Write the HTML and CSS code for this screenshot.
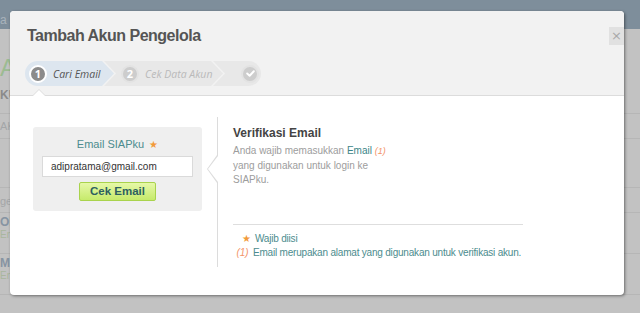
FILE: index.html
```html
<!DOCTYPE html>
<html>
<head>
<meta charset="utf-8">
<link rel="stylesheet" href="styles.css">
</head>
<body>
<div class="page">
  <div class="topbar"><span class="topbar-text">a H</span></div>
  <div class="page-content">
    <div class="pc-title">A</div>
    <div class="pc-sub">KU</div>
    <div class="pc-row pc-ak">AK</div>
    <div class="pc-row pc-empty"></div>
    <div class="pc-row pc-gel">gel</div>
    <div class="pc-row pc-item"><b>OM</b><small>Em</small></div>
    <div class="pc-row pc-item"><b>MO</b><small>Em</small></div>
    <div class="pc-row"></div>
  </div>
</div>

<div class="modal">
  <div class="modal-header">
    <h1 class="modal-title">Tambah Akun Pengelola</h1>
    <button class="close">&times;</button>
    <div class="steps">
      <div class="step step-active">
        <span class="num">1</span><span class="label">Cari Email</span>
      </div>
      <div class="step step-2">
        <span class="num num-off">2</span><span class="label">Cek Data Akun</span>
      </div>
      <div class="step step-3">
        <span class="num num-off">
          <svg width="9" height="7" viewBox="0 0 10 8"><path d="M1.2 4 L4 6.6 L8.8 1.4" fill="none" stroke="#fff" stroke-width="2.2" stroke-linecap="round" stroke-linejoin="round"/></svg>
        </span>
      </div>
    </div>
    <span class="caret"></span>
  </div>
  <div class="modal-body">
    <div class="form-box">
      <div class="form-label">Email SIAPku <span class="star">&#9733;</span></div>
      <input class="form-input" type="text" value="adipratama@gmail.com">
      <button class="btn-cek">Cek Email</button>
    </div>
    <div class="info">
      <span class="notch"></span>
      <h2 class="info-title">Verifikasi Email</h2>
      <p class="info-text">Anda wajib memasukkan <span class="teal">Email</span> <i class="ref">(1)</i><br>yang digunakan untuk login ke<br>SIAPku.</p>
      <div class="notes">
        <div class="note"><span class="note-mark star">&#9733;</span>Wajib diisi</div>
        <div class="note"><i class="note-mark ref">(1)</i>Email merupakan alamat yang digunakan untuk verifikasi akun.</div>
      </div>
    </div>
  </div>
</div>
</body>
</html>
```

FILE: styles.css
```css
* { box-sizing: border-box; }
html, body { margin: 0; padding: 0; }
body {
  width: 640px;
  height: 313px;
  overflow: hidden;
  background: #c0c0c0;
  font-family: "Liberation Sans", Arial, sans-serif;
  position: relative;
}
.page { height: 313px; overflow: hidden; }
.topbar {
  height: 29px;
  background: #7e8e9b;
  padding: 10px 0 0 0;
}
.topbar-text { color: #a9b3bb; font-size: 12px; }
.page-content { background: #c2c2c2; color: #9a9a9a; }
.pc-title { color: #9cbb92; font-size: 24px; line-height: 24px; padding-top: 27px; height: 56px; }
.pc-sub { font-weight: bold; font-size: 12px; color: #8a8a8a; height: 28px; padding-top: 3px; }
.pc-row { border-top: 1px solid #b6b6b6; font-size: 11px; color: #a4a6a8; }
.pc-ak { height: 25px; padding-top: 6px; }
.pc-empty { height: 49px; }
.pc-gel { height: 25px; padding-top: 7px; }
.pc-item { height: 41px; padding-top: 3px; line-height: 11px; }
.pc-item b { display: block; color: #8794a2; font-size: 12px; line-height: 13px; }
.pc-item small { color: #a9b69e; font-size: 10px; }
.pc-row:last-child { height: 20px; }

.modal {
  position: absolute;
  left: 10px;
  top: 11px;
  width: 614px;
  height: 284px;
  background: #fff;
  border-radius: 4px;
  box-shadow: 1px 1px 3px rgba(0,0,0,0.45);
  overflow: hidden;
  display: flex;
  flex-direction: column;
}
.modal-header {
  height: 85px;
  flex-shrink: 0;
  background: #f2f2f2;
  border-bottom: 1px solid #dcdcdc;
  padding: 15px 0 0 15px;
  position: relative;
}
.modal-title {
  margin: 0 0 0 2px;
  font-size: 16px;
  letter-spacing: -0.5px;
  font-weight: bold;
  color: #555;
  line-height: 20px;
}
.close {
  position: absolute;
  right: 0;
  top: 16px;
  width: 15px;
  height: 18px;
  border: 0;
  padding: 0;
  background: #e1e1e1;
  color: #a9a9a9;
  font-size: 13px;
  line-height: 18px;
  font-family: "DejaVu Sans", sans-serif;
}
.steps {
  display: flex;
  margin-top: 15px;
  height: 25px;
}
.step {
  display: flex;
  align-items: center;
  height: 25px;
  background: #e8e8e8;
  font-family: "Open Sans", "DejaVu Sans", sans-serif;
  font-style: italic;
  font-size: 10.5px;
  color: #bababa;
}
.step-active {
  width: 89px;
  background: #dde6ef;
  color: #555;
  border-radius: 13px 0 0 13px;
  clip-path: polygon(0 0, calc(100% - 12px) 0, 100% 50%, calc(100% - 12px) 100%, 0 100%);
  padding-left: 4px;
}
.step-2 {
  width: 119px;
  margin-left: -10px;
  padding-left: 17px;
  clip-path: polygon(0 0, calc(100% - 12px) 0, 100% 50%, calc(100% - 12px) 100%, 0 100%, 12px 50%);
}
.step-3 {
  width: 48px;
  margin-left: -10px;
  padding-left: 28px;
  border-radius: 0 13px 13px 0;
  clip-path: polygon(0 0, 100% 0, 100% 100%, 0 100%, 12px 50%);
}
.num {
  width: 18px;
  height: 18px;
  border-radius: 50%;
  background: #8b8b8b;
  border: 2px solid #fff;
  color: #fff;
  font-style: normal;
  font-weight: bold;
  font-size: 11px;
  display: flex;
  align-items: center;
  justify-content: center;
  margin-right: 6px;
  flex-shrink: 0;
}
.num-off {
  background: #cdcdcd;
  border-color: #e3e3e3;
}
.caret {
  position: absolute;
  left: 22px;
  bottom: -1px;
  width: 0;
  height: 0;
  border-left: 7px solid transparent;
  border-right: 7px solid transparent;
  border-bottom: 7px solid #dcdcdc;
}
.caret::after {
  content: "";
  position: absolute;
  left: -6px;
  top: 1px;
  border-left: 6px solid transparent;
  border-right: 6px solid transparent;
  border-bottom: 6px solid #fff;
}
.modal-body {
  flex: 1;
  display: flex;
  align-items: flex-start;
  padding: 31px 0 0 23px;
}
.form-box {
  width: 169px;
  height: 84px;
  background: #efefef;
  border-radius: 3px;
  display: flex;
  flex-direction: column;
  align-items: center;
  padding-top: 10px;
}
.form-label {
  color: #4c8c8e;
  font-size: 11px;
  line-height: 14px;
}
.star { color: #f29a3a; font-size: 10px; margin-left: 2px; }
.form-input {
  margin-top: 4px;
  width: 151px;
  height: 21px;
  border: 1px solid #dadada;
  background: #fff;
  font-family: "Liberation Sans", Arial, sans-serif;
  font-size: 10px;
  color: #333;
  padding: 0 0 0 8px;
  outline: none;
}
.btn-cek {
  margin-top: 5px;
  width: 77px;
  height: 19px;
  border: 1px solid #a9d34d;
  border-radius: 2px;
  background: linear-gradient(#e6f8a8, #c6ea6b);
  color: #2d5f60;
  font-family: "Liberation Sans", Arial, sans-serif;
  font-weight: bold;
  font-size: 11.5px;
  padding: 0;
  line-height: 17px;
}
.info {
  position: relative;
  margin-left: 15px;
  margin-top: -10px;
  border-left: 1px solid #dcdcdc;
  padding: 9px 0 0 15px;
  height: 150px;
  width: 306px;
}
.notch {
  position: absolute;
  left: -11px;
  top: 38px;
  width: 0;
  height: 0;
  border-top: 14px solid transparent;
  border-bottom: 14px solid transparent;
  border-right: 10px solid #dcdcdc;
}
.notch::after {
  content: "";
  position: absolute;
  left: 1px;
  top: -13px;
  border-top: 13px solid transparent;
  border-bottom: 13px solid transparent;
  border-right: 10px solid #fff;
}
.info-title {
  margin: 0;
  font-size: 12px;
  font-weight: bold;
  color: #444;
  line-height: 15px;
}
.info-text {
  margin: 3px 0 0 0;
  font-size: 10px;
  line-height: 14.5px;
  color: #9d9d9d;
}
.teal { color: #3b8587; }
.ref { color: #f39469; font-size: 9px; }
.notes {
  margin-top: 36px;
  border-top: 1px solid #dedede;
  padding-top: 7px;
  padding-left: 5px;
  font-size: 10px;
  color: #4c8c8e;
  line-height: 14px;
  white-space: nowrap;
}
.note { letter-spacing: -0.2px; }
.note-mark {
  display: inline-block;
  width: 12px;
  margin-right: 3px;
  text-align: center;
  letter-spacing: 0;
}
.note .ref { font-size: 10px; width: 15px; margin-left: -3px; margin-right: 3px; }
```
